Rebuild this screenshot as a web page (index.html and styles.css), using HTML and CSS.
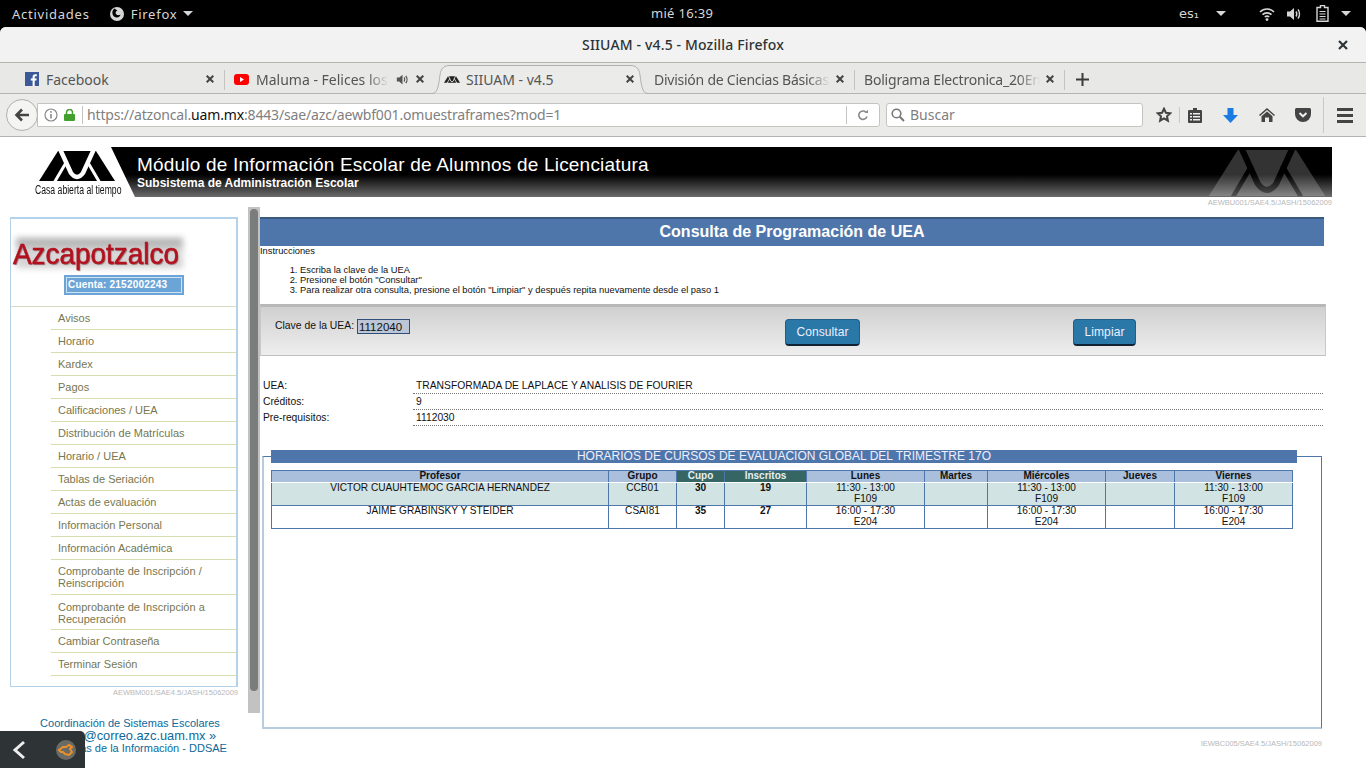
FILE: index.html
```html
<!DOCTYPE html>
<html lang="es">

<head>
    <meta charset="UTF-8">
    <title>SIIUAM - v4.5 - Mozilla Firefox</title>
    <link rel="stylesheet" href="styles.css">
</head>

<body>
    <div class="topbar">
        <div class="top-left">
            <span>Actividades</span>
            <span class="top-app">
                <svg width="16" height="16" viewBox="0 0 16 16"><circle cx="8" cy="8" r="7" fill="#d6d6d6"/><path d="M6 2.500 C3 3.500 2.500 8 5 10.500 C7.500 12.500 11 11.500 11.500 8.500 C10.500 9.500 8 9.500 7 8 C6 6.500 7 5 8.500 4.500 C7.500 4 6.500 3.500 6 2.500Z" fill="#000"/></svg>
                Firefox <i class="caret"></i>
            </span>
        </div>
        <div class="top-clock">mié 16:39</div>
        <div class="top-right">
            <span class="lang">es₁</span>
            <i class="caret lang-caret"></i>
            <svg class="wifi" width="16" height="16" viewBox="0 0 16 16" fill="none" stroke="#d6d6d6" stroke-width="1.600"><path d="M1 6 C5 2 11 2 15 6"/><path d="M3.500 8.600 C6 6.300 10 6.300 12.500 8.600"/><path d="M5.800 11 C7 10 9 10 10.200 11"/><circle cx="8" cy="13.600" r="1.400" fill="#d6d6d6" stroke="none"/></svg>
            <svg class="sound" width="16" height="16" viewBox="0 0 16 16" fill="none" stroke="#d6d6d6" stroke-width="1.400"><path d="M1 5.500h3l4-3.500v12l-4-3.500H1z" fill="#d6d6d6" stroke="none"/><path d="M10 5.500 C11 7 11 9 10 10.500"/><path d="M12 3.500 C14 6 14 10 12 12.500"/></svg>
            <svg class="battery" width="13" height="17" viewBox="0 0 13 17" fill="none" stroke="#d6d6d6" stroke-width="1.400"><path d="M4.500 .5h4v2h3.500v13.800H1V2.500h3.500z"/><path d="M3.500 6.500h6M3.500 9h6M3.500 11.500h6M3.500 14h6" stroke-width="1.200"/></svg>
            <i class="caret end-caret"></i>
        </div>
    </div>

    <div class="window">
        <div class="titlebar">
            <span class="title">SIIUAM - v4.5 - Mozilla Firefox</span>
            <svg class="win-close" width="10" height="10" viewBox="0 0 10 10" stroke="#2e3436" stroke-width="2.200"><path d="M1 1l8 8M9 1l-8 8"/></svg>
        </div>

        <div class="tabbar">
            <div class="tab tab-fb">
                <svg width="14" height="14" viewBox="0 0 14 14"><rect width="14" height="14" fill="#3b5998"/><path d="M9.700 14V8.600h1.700l.3-2.100h-2V5.200c0-.6.200-1 1-1h1.100V2.300c-.2 0-.8-.1-1.600-.1-1.600 0-2.600 1-2.600 2.700v1.600H5.800v2.100h1.800V14z" fill="#fff"/></svg>
                <span class="tab-label">Facebook</span>
                <svg class="tab-x" width="8" height="8" viewBox="0 0 8 8" stroke="#444" stroke-width="2"><path d="M.7.7l6.600 6.600M7.300.7L.7 7.300"/></svg>
            </div>
            <div class="tab tab-yt">
                <svg width="15" height="11" viewBox="0 0 15 11"><rect width="15" height="11" rx="3" fill="#f00"/><path d="M6 3l4 2.500L6 8z" fill="#fff"/></svg>
                <span class="tab-label">Maluma - Felices los</span>
                <svg class="tab-sound" width="13" height="13" viewBox="0 0 16 16" fill="none" stroke="#555" stroke-width="1.600"><path d="M1 5.500h3l4-3.500v12l-4-3.500H1z" fill="#555" stroke="none"/><path d="M10 5.500 C11 7 11 9 10 10.500"/><path d="M12 3.500 C14 6 14 10 12 12.500"/></svg>
                <svg class="tab-x" width="8" height="8" viewBox="0 0 8 8" stroke="#444" stroke-width="2"><path d="M.7.7l6.600 6.600M7.300.7L.7 7.300"/></svg>
            </div>
            <div class="tab tab-active">
                <svg class="tab-shape" width="216" height="31" viewBox="0 0 216 31"><path d="M0 30.500 C6 30.500 6.500 22 8 12 C9 5 12 2.500 18 2.500 H198 C204 2.500 207 5 208 12 C209.500 22 210 30.500 216 30.500" fill="#ebebe9" stroke="#b0b0ac"/></svg>
                <svg width="16" height="7" viewBox="0 0 76 30"><path d="M0 30L19 0h38l19 30z" fill="#222"/><path d="M21-2L32 22Q38 30 44 22L55-2M15 32L28 10M61 32L48 10" fill="none" stroke="#ebebe9" stroke-width="4"/></svg>
                <span class="tab-label">SIIUAM - v4.5</span>
                <svg class="tab-x" width="8" height="8" viewBox="0 0 8 8" stroke="#444" stroke-width="2"><path d="M.7.7l6.600 6.600M7.300.7L.7 7.300"/></svg>
            </div>
            <div class="tab tab-dcb">
                <span class="tab-label">División de Ciencias Básicas</span>
                <svg class="tab-x" width="8" height="8" viewBox="0 0 8 8" stroke="#444" stroke-width="2"><path d="M.7.7l6.600 6.600M7.300.7L.7 7.300"/></svg>
            </div>
            <div class="tab tab-bol">
                <span class="tab-label">Boligrama Electronica_20En</span>
                <svg class="tab-x" width="8" height="8" viewBox="0 0 8 8" stroke="#444" stroke-width="2"><path d="M.7.7l6.600 6.600M7.300.7L.7 7.300"/></svg>
            </div>
            <svg class="tab-new" width="13" height="13" viewBox="0 0 13 13" stroke="#3b3b3b" stroke-width="2"><path d="M6.500 0v13M0 6.500h13"/></svg>
        </div>

        <div class="navbar">
            <div class="back-btn">
                <svg width="16" height="14" viewBox="0 0 16 14" fill="none" stroke="#444" stroke-width="2.600"><path d="M15 7H3M8 1.500L2.500 7 8 12.500"/></svg>
            </div>
            <div class="urlbar">
                <svg class="url-info" width="14" height="14" viewBox="0 0 14 14" fill="none" stroke="#888" stroke-width="1.200"><circle cx="7" cy="7" r="6"/><path d="M7 6v4.500" stroke-width="1.600"/><circle cx="7" cy="3.900" r=".9" fill="#888" stroke="none"/></svg>
                <svg class="url-lock" width="11" height="12" viewBox="0 0 11 12"><rect y="5" width="11" height="7" rx="1" fill="#43a02f"/><path d="M2.500 5.500V3.500a3 3 0 0 1 6 0v2" fill="none" stroke="#43a02f" stroke-width="1.500"/></svg>
                <span class="url-text">https://atzoncal.<b>uam.mx</b>:8443/sae/azc/aewbf001.omuestraframes?mod=1</span>
                <span class="url-reload">
                    <svg width="12" height="12" viewBox="0 0 12 12" fill="none" stroke="#888" stroke-width="1.600"><path d="M10 7.500A4.200 4.200 0 1 1 8.800 3"/><path d="M7.500 4h3.500V.8" fill="#888" stroke="none"/></svg>
                </span>
            </div>
            <div class="searchbar">
                <svg width="14" height="14" viewBox="0 0 14 14" fill="none" stroke="#777" stroke-width="1.600"><circle cx="5.500" cy="5.500" r="4.300"/><path d="M8.800 8.800L13 13" stroke-width="2"/></svg>
                <span>Buscar</span>
            </div>
            <div class="tools">
                <svg class="t-star" width="16" height="16" viewBox="0 0 16 16" fill="none" stroke="#444" stroke-width="2"><path d="M8 1.800l1.900 4 4.300.5-3.200 3 .9 4.400L8 11.500l-3.900 2.200.9-4.400-3.200-3 4.300-.5z"/></svg>
                <i class="t-sep"></i>
                <svg class="t-list" width="14" height="15" viewBox="0 0 14 15"><path d="M5 0h4v2h4a1 1 0 0 1 1 1v11a1 1 0 0 1-1 1H1a1 1 0 0 1-1-1V3a1 1 0 0 1 1-1h4z" fill="#444"/><path d="M2 5h2v1.500H2zM5 5h7v1.500H5zM2 8h2v1.500H2zM5 8h7v1.500H5zM2 11h2v1.500H2zM5 11h7v1.500H5z" fill="#eee"/></svg>
                <svg class="t-down" width="15" height="15" viewBox="0 0 15 15"><path d="M4.500 0h6v7H15l-7.500 8L0 7h4.500z" fill="#1a7ce2"/></svg>
                <svg class="t-home" width="16" height="14" viewBox="0 0 16 14"><path d="M8 0l8 7-1 1-7-6-7 6-1-1z" fill="#444"/><path d="M8 3.500l5.500 4.700V14H10V9.500H6V14H2.500V8.200z" fill="#444"/></svg>
                <svg class="t-pocket" width="16" height="14" viewBox="0 0 16 14"><path d="M1.500 0h13A1.500 1.500 0 0 1 16 1.500V6a8 8 0 0 1-16 0V1.500A1.500 1.500 0 0 1 1.500 0z" fill="#444"/><path d="M4.500 5L8 8.300 11.500 5" fill="none" stroke="#eee" stroke-width="2"/></svg>
                <i class="t-sep t-sep-tall"></i>
                <span class="t-menu"><i></i><i></i><i></i></span>
            </div>
        </div>
    </div>

    <div class="page">
        <div class="banner-row">
            <div class="logo-box">
                <svg class="logo" width="76" height="30" viewBox="0 0 76 30">
                    <path d="M0 30L19 0h38l19 30z" fill="#000"/>
                    <path d="M21-2L32 22Q38 30 44 22L55-2" fill="none" stroke="#fff" stroke-width="4.500"/>
                    <path d="M15 32L28 10M61 32L48 10" fill="none" stroke="#fff" stroke-width="3"/>
                </svg>
                <span class="logo-text">Casa abierta al tiempo</span>
            </div>
            <div class="banner">
                <div class="banner-titles">
                    <h1>Módulo de Información Escolar de Alumnos de Licenciatura</h1>
                    <h2>Subsistema de Administración Escolar</h2>
                </div>
                <svg class="banner-mark" width="118" height="46" viewBox="0 0 76 30">
                    <path d="M0 30L19 0h38l19 30z" fill="#fff"/>
                    <path d="M21-2L32 22Q38 30 44 22L55-2" fill="none" stroke="#000" stroke-width="4"/>
                    <path d="M15 32L28 10M61 32L48 10" fill="none" stroke="#000" stroke-width="3"/>
                </svg>
            </div>
        </div>
        <div class="version banner-version">AEWBU001/SAE4.5/JASH/15062009</div>

        <div class="columns">
            <aside class="side">
                <div class="side-box">
                    <div class="campus"><span>Azcapotzalco</span></div>
                    <div class="account"><span>Cuenta: 2152002243</span></div>
                    <ul class="menu">
                        <li>Avisos</li>
                        <li>Horario</li>
                        <li>Kardex</li>
                        <li>Pagos</li>
                        <li>Calificaciones / UEA</li>
                        <li>Distribución de Matrículas</li>
                        <li>Horario / UEA</li>
                        <li>Tablas de Seriación</li>
                        <li>Actas de evaluación</li>
                        <li>Información Personal</li>
                        <li>Información Académica</li>
                        <li>Comprobante de Inscripción / Reinscripción</li>
                        <li class="menu-recup">Comprobante de Inscripción a Recuperación</li>
                        <li>Cambiar Contraseña</li>
                        <li>Terminar Sesión</li>
                    </ul>
                </div>
                <div class="version">AEWBM001/SAE4.5/JASH/15062009</div>
                <div class="side-foot">
                    <div>Coordinación de Sistemas Escolares</div>
                    <div class="foot-mail">cseazc@correo.azc.uam.mx »</div>
                    <div>Tecnologías de la Información - DDSAE</div>
                </div>
            </aside>

            <div class="scroll"><div class="scroll-thumb"></div></div>

            <main class="main">
                <div class="main-title">Consulta de Programación de UEA</div>
                <div class="instr-label">Instrucciones</div>
                <ol class="instr">
                    <li>Escriba la clave de la UEA</li>
                    <li>Presione el botón "Consultar"</li>
                    <li>Para realizar otra consulta, presione el botón "Limpiar" y después repita nuevamente desde el paso 1</li>
                </ol>

                <div class="form-band">
                    <label class="form-key">Clave de la UEA: <input class="form-input" value="1112040"></label>
                    <button class="btn btn-consult">Consultar</button>
                    <button class="btn btn-clear">Limpiar</button>
                </div>

                <dl class="info">
                    <dt>UEA:</dt><dd>TRANSFORMADA DE LAPLACE Y ANALISIS DE FOURIER</dd>
                    <dt>Créditos:</dt><dd>9</dd>
                    <dt>Pre-requisitos:</dt><dd>1112030</dd>
                </dl>

                <section class="sched">
                    <div class="sched-title">HORARIOS DE CURSOS DE EVALUACION GLOBAL DEL TRIMESTRE 17O</div>
                    <table class="grid">
                        <colgroup>
                            <col class="c-prof"><col class="c-grp"><col class="c-cup"><col class="c-ins"><col class="c-lun"><col class="c-mar"><col class="c-mie"><col class="c-jue"><col class="c-vie">
                        </colgroup>
                        <thead>
                            <tr>
                                <th>Profesor</th><th>Grupo</th><th class="th-dark">Cupo</th><th class="th-dark">Inscritos</th><th>Lunes</th><th>Martes</th><th>Miércoles</th><th>Jueves</th><th>Viernes</th>
                            </tr>
                        </thead>
                        <tbody>
                            <tr class="row-alt">
                                <td><div class="cell">VICTOR CUAUHTEMOC GARCIA HERNANDEZ</div></td><td><div class="cell">CCB01</div></td><td><div class="cell"><b>30</b></div></td><td><div class="cell"><b>19</b></div></td><td><div class="cell">11:30 - 13:00<br>F109</div></td><td></td><td><div class="cell">11:30 - 13:00<br>F109</div></td><td></td><td><div class="cell">11:30 - 13:00<br>F109</div></td>
                            </tr>
                            <tr>
                                <td><div class="cell">JAIME GRABINSKY Y STEIDER</div></td><td><div class="cell">CSAI81</div></td><td><div class="cell"><b>35</b></div></td><td><div class="cell"><b>27</b></div></td><td><div class="cell">16:00 - 17:30<br>E204</div></td><td></td><td><div class="cell">16:00 - 17:30<br>E204</div></td><td></td><td><div class="cell">16:00 - 17:30<br>E204</div></td>
                            </tr>
                        </tbody>
                    </table>
                </section>
                <div class="version main-version">IEWBC005/SAE4.5/JASH/15062009</div>
            </main>
        </div>
    </div>

    <!-- barra de captura encima de la pagina -->
    <div class="dock">
        <svg width="14" height="20" viewBox="0 0 14 20" fill="none" stroke="#eee" stroke-width="3"><path d="M12 2L3 10l9 8"/></svg>
        <span class="dock-icon">
            <svg width="20" height="20" viewBox="0 0 20 20"><circle cx="10" cy="10" r="10" fill="#6b6b66"/><path d="M3 10l4-3h3l3-2 3 2-2 2 2 3-3 3-4-1-2-2H5z" fill="none" stroke="#e8902a" stroke-width="2"/></svg>
        </span>
    </div>
</body>

</html>
```

FILE: styles.css
```css
* {
    margin: 0;
    padding: 0;
    box-sizing: border-box;
}

html,
body {
    height: 768px;
    overflow: hidden;
}

body {
    background: #000;
    font-family: "Liberation Sans", Arial, sans-serif;
    display: flex;
    flex-direction: column;
    position: relative;
}

/* gnome top bar */
.topbar {
    height: 27px;
    flex: none;
    background: #000;
    color: #d6d6d6;
    font-family: "Noto Sans", sans-serif;
    font-size: 13px;
    display: flex;
    align-items: center;
    justify-content: space-between;
    padding: 0 15px 0 12px;
    position: relative;
}

.top-left {
    display: flex;
    align-items: center;
    gap: 19px;
    letter-spacing: .75px;
}

.top-app {
    display: flex;
    align-items: center;
    gap: 6px;
}

.caret {
    display: inline-block;
    width: 0;
    height: 0;
    border-left: 5px solid transparent;
    border-right: 5px solid transparent;
    border-top: 5px solid #d6d6d6;
}

.top-clock {
    position: absolute;
    left: 651px;
    top: 4px;
    letter-spacing: .3px;
}

.top-right {
    display: flex;
    align-items: center;
}

.lang {
    font-family: "DejaVu Sans", sans-serif;
    font-size: 13px;
}

.lang-caret {
    margin-left: 17px;
}

.wifi {
    margin-left: 33px;
}

.sound {
    margin-left: 11px;
}

.battery {
    margin-left: 14px;
}

.end-caret {
    margin-left: 12px;
}

/* firefox chrome */
.window {
    flex: none;
    height: 110px;
    background: #e8e8e7;
    border-radius: 6px 6px 0 0;
    color: #3b3b3b;
    font-family: "Noto Sans", sans-serif;
}

.titlebar {
    height: 36px;
    background: #f2f2f2;
    border-radius: 6px 6px 0 0;
    border-bottom: 1px solid #b4b4b0;
    display: flex;
    align-items: center;
    justify-content: center;
    position: relative;
}

.title {
    font-size: 14px;
    font-weight: 500;
    letter-spacing: .15px;
    color: #2e3436;
}

.win-close {
    position: absolute;
    right: 18px;
    top: 13px;
}

.tabbar {
    height: 31px;
    background: #e8e8e7;
    border-bottom: 1px solid #b4b4b0;
    display: flex;
    align-items: center;
    font-size: 14px;
    position: relative;
}

.tab {
    height: 30px;
    padding-top: 2px;
    display: flex;
    align-items: center;
    position: relative;
    white-space: nowrap;
    color: #555;
}

.tab-label {
    overflow: hidden;
    flex: 1;
    -webkit-mask-image: linear-gradient(to left, transparent, #000 22px);
    mask-image: linear-gradient(to left, transparent, #000 22px);
}

.tab-x {
    flex: none;
}

/* separador corto entre pestanas */
.tab-fb::after,
.tab-dcb::after,
.tab-bol::after {
    content: "";
    position: absolute;
    right: 0;
    top: 7px;
    width: 1px;
    height: 20px;
    background: #c4c4c0;
}

.tab-fb {
    width: 225px;
    padding-left: 25px;
    padding-right: 11px;
    gap: 7px;
}

.tab-fb .tab-label,
.tab-active .tab-label {
    -webkit-mask-image: none;
    mask-image: none;
}

.tab-yt {
    width: 207px;
    padding-left: 9px;
    padding-right: 8px;
    gap: 7px;
}

.tab-sound {
    flex: none;
}

.tab-active {
    width: 216px;
    padding-left: 12px;
    padding-right: 14px;
    gap: 6px;
    isolation: isolate;
}

.tab-shape {
    position: absolute;
    left: 0;
    top: 0;
    z-index: -1;
}

.tab-dcb {
    width: 207px;
    padding-left: 6px;
    padding-right: 11px;
    gap: 6px;
    letter-spacing: -.25px;
}

.tab-bol {
    width: 210px;
    padding-left: 9px;
    padding-right: 11px;
    gap: 6px;
    letter-spacing: -.2px;
}

.tab-new {
    margin-left: 11px;
    margin-top: 2px;
}

.navbar {
    height: 43px;
    background: #ebebe9;
    border-bottom: 1px solid #b4b4b0;
    display: flex;
    align-items: center;
    padding: 0 6px;
    position: relative;
}

.back-btn {
    width: 32px;
    height: 32px;
    border-radius: 50%;
    background: #f4f4f3;
    border: 1px solid #b0b0ac;
    display: flex;
    align-items: center;
    justify-content: center;
    flex: none;
    margin-top: -1px;
    z-index: 1;
}

.urlbar {
    width: 843px;
    height: 24px;
    margin-left: -1px;
    background: #fff;
    border: 1px solid #c4c4c0;
    border-radius: 0 3px 3px 0;
    display: flex;
    align-items: center;
    font-size: 14px;
    color: #808080;
    padding-left: 6px;
    margin-top: -1px;
}

.url-lock {
    margin-left: 6px;
    flex: none;
}

.url-text {
    flex: 1;
    border-left: 1px solid #c4c4c0;
    margin-left: 7px;
    padding-left: 4px;
    height: 18px;
    line-height: 18px;
    white-space: nowrap;
    letter-spacing: -.16px;
}

.url-text b {
    font-weight: 400;
    color: #111;
}

.url-reload {
    width: 33px;
    height: 18px;
    border-left: 1px solid #c4c4c0;
    display: flex;
    align-items: center;
    justify-content: center;
}

.searchbar {
    width: 257px;
    height: 24px;
    margin-left: 6px;
    margin-top: -1px;
    background: #fff;
    border: 1px solid #c4c4c0;
    border-radius: 3px;
    display: flex;
    align-items: center;
    gap: 5px;
    padding-left: 4px;
    font-size: 14px;
    color: #808080;
}

.tools {
    display: flex;
    align-items: center;
    margin-left: 13px;
    height: 42px;
}

.t-sep {
    width: 1px;
    height: 16px;
    background: #c8c8c4;
    margin: 0 8px 0 7px;
}

.t-down {
    margin-left: 21px;
}

.t-home {
    margin-left: 21px;
}

.t-pocket {
    margin-left: 20px;
}

.t-sep-tall {
    height: 36px;
    margin: 0 13px 0 12px;
}

.t-menu {
    display: flex;
    flex-direction: column;
    gap: 3px;
}

.t-menu i {
    display: block;
    width: 16px;
    height: 3px;
    background: #444;
}

/* pagina */
.page {
    flex: 1;
    background: #fff;
    padding: 10px 34px 0 10px;
    overflow: hidden;
}

.banner-row {
    display: flex;
    height: 50px;
    margin-left: 25px;
}

.logo-box {
    width: 76px;
    flex: none;
    padding: 4px 0 0 4px;
}

.logo {
    display: block;
}

.logo-text {
    display: block;
    font-size: 12px;
    color: #111;
    white-space: nowrap;
    transform: scaleX(.72);
    transform-origin: left;
    margin-top: 3px;
    margin-left: -4px;
    line-height: 12px;
}

.banner {
    flex: 1;
    height: 50px;
    background: linear-gradient(to bottom, #000 0, #000 55%, #6c6c6c 100%);
    clip-path: polygon(0 0, 100% 0, 100% 100%, 24px 100%);
    display: flex;
    justify-content: space-between;
    padding-left: 26px;
    color: #fff;
}

.banner-titles h1 {
    font-size: 19px;
    font-weight: 400;
    line-height: 22px;
    margin-top: 7px;
    letter-spacing: .2px;
}

.banner-titles h2 {
    font-size: 12px;
    font-weight: 700;
    line-height: 14px;
}

.banner-mark {
    opacity: .2;
    margin-top: 3px;
    margin-right: 6px;
}

.version {
    font-size: 7.5px;
    color: #b8b8b8;
    text-align: right;
    line-height: 9px;
}

.banner-version {
    margin-top: 1px;
}

.columns {
    display: flex;
    align-items: flex-start;
}

.side {
    width: 228px;
    flex: none;
    margin-top: 10px;
}

.side-box {
    height: 470px;
    border: 2px solid #b4d2ea;
    border-left-width: 1px;
    border-bottom-width: 1px;
    padding-top: 16px;
}

.campus {
    height: 36px;
    margin-left: 2px;
    width: 173px;
    position: relative;
}

.campus::before {
    content: "";
    position: absolute;
    inset: 3px;
    background: linear-gradient(to bottom, #a4a4a4, #dcdcdc 50%, #cfcfcf);
    filter: blur(3px);
}

.campus span {
    display: block;
    position: relative;
    font-size: 30px;
    font-weight: 400;
    color: #b2121f;
    -webkit-text-stroke: .6px #b2121f;
    line-height: 38px;
    white-space: nowrap;
    transform: scaleX(.93);
    transform-origin: left;
    text-shadow: 1px 1px 1px #9a7a7c;
}

.account {
    margin: 4px 0 0 53px;
    width: 120px;
    height: 20px;
    background: #6ba5d8;
    border: 1px solid #6ba5d8;
    padding: 1px;
}

.account span {
    display: block;
    height: 16px;
    border: 1px solid #cfe2f2;
    color: #fff;
    font-size: 10px;
    font-weight: 700;
    letter-spacing: .2px;
    line-height: 14px;
    padding-left: 1px;
    white-space: nowrap;
}

.menu {
    list-style: none;
    margin-top: 11px;
    border-top: 1px solid #d8dcc0;
}

.menu li {
    margin-left: 40px;
    padding: 5px 0 5px 7px;
    font-size: 11px;
    line-height: 12px;
    color: #77774f;
    border-bottom: 1px solid #d8dcb0;
}

.menu .menu-recup {
    padding: 6px 0 4px 7px;
}

.side > .version {
    margin-top: 1px;
}

.side-foot {
    margin-top: 20px;
    padding-left: 12px;
    font-size: 11px;
    line-height: 12px;
    color: #0b6a9c;
    white-space: nowrap;
    text-align: center;
}

.foot-mail {
    font-size: 12.8px;
    line-height: 13px;
}

.scroll {
    width: 12px;
    height: 506px;
    flex: none;
    background: #c2c2c2;
    margin-left: 10px;
    padding: 2px 2px 0;
}

.scroll-thumb {
    width: 8px;
    height: 482px;
    background: #7a7d7c;
    border-radius: 4px;
}

.main {
    width: 1064px;
    flex: none;
    margin-top: 10px;
}

.main-title {
    height: 29px;
    background: #4f76aa;
    border-top: 2px solid #3a5a80;
    color: #fff;
    font-size: 16px;
    font-weight: 700;
    text-align: center;
    line-height: 26px;
}

.instr-label {
    font-size: 9.33px;
    line-height: 11px;
    color: #111;
}

.instr {
    font-size: 9.33px;
    line-height: 10px;
    color: #111;
    margin-top: 8px;
    padding-left: 40px;
    height: 39px;
}

.form-band {
    width: 1066px;
    height: 52px;
    border-top: 3px solid #b8b8b8;
    border-left: 1px solid #c8c8c8;
    border-right: 1px solid #c8c8c8;
    border-bottom: 1px solid #c0c0c0;
    background: linear-gradient(to bottom, #d0d0d0, #eeeeee);
    display: flex;
    align-items: flex-start;
}

.form-key {
    font-size: 10.4px;
    color: #111;
    margin: 12px 0 0 14px;
    white-space: nowrap;
}

.form-input {
    width: 53px;
    height: 15px;
    background: #bcc6d6;
    border: 1px solid #2f4f78;
    font-family: "Liberation Sans", sans-serif;
    font-size: 11.5px;
    padding: 0 0 0 1px;
    vertical-align: middle;
    color: #111;
}

.btn {
    height: 27px;
    background: #2a78a8;
    color: #eef;
    border: 1px solid #1f5f88;
    border-bottom: 2px solid #123;
    border-radius: 4px;
    font-family: "Liberation Sans", sans-serif;
    font-size: 12px;
    letter-spacing: .1px;
    margin-top: 12px;
    padding: 0;
}

.btn-consult {
    width: 75px;
    margin-left: 375px;
}

.btn-clear {
    width: 63px;
    margin-left: 213px;
}

.info {
    margin-top: 22px;
    display: grid;
    grid-template-columns: 153px 1fr;
    font-size: 10.3px;
    line-height: 12px;
    color: #111;
    padding-left: 3px;
}

.info dt {
    height: 16px;
    padding-top: 2px;
}

.info dd {
    height: 16px;
    padding-top: 2px;
    border-bottom: 1px dotted #777;
    margin-left: -3px;
    padding-left: 3px;
    margin-right: 1px;
}

.sched {
    margin-top: 24px;
    height: 279px;
    width: 1060px;
    margin-left: 2px;
    position: relative;
}

/* marco del horario, empieza debajo del titulo */
.sched::before {
    content: "";
    position: absolute;
    inset: 6px 0 0 0;
    border: 2px solid #b8cce0;
    border-top: 1px solid #4f76aa;
    border-right: 1px solid #4f76aa;
}

.sched-title {
    height: 13px;
    margin-left: 9px;
    width: 1026px;
    background: #4f76aa;
    color: #eef;
    font-size: 12px;
    line-height: 13px;
    text-align: center;
    position: relative;
}

.grid {
    margin: 7px 0 0 9px;
    width: 1021px;
    border-collapse: collapse;
    table-layout: fixed;
    font-size: 10.1px;
    line-height: 11px;
    color: #111;
    text-align: center;
}

.c-prof { width: 337px; }
.c-grp { width: 68px; }
.c-cup { width: 48px; }
.c-ins { width: 82px; }
.c-lun { width: 118px; }
.c-mar { width: 63px; }
.c-mie { width: 118px; }
.c-jue { width: 69px; }
.c-vie { width: 118px; }

.grid th,
.grid td {
    border: 1px solid #4f76aa;
    padding: 0;
    vertical-align: top;
}

.grid th {
    height: 12px;
    background: #a9bfdc;
    border-bottom-color: #fff;
    font-size: 10px;
    font-weight: 700;
    line-height: 9px;
}

.grid th.th-dark {
    background: #356664;
    color: #e8f0f0;
}

.grid td {
    height: 23px;
}

.cell {
    margin-top: -1px;
}

.row-alt td {
    background: #d1e3e2;
}

.main-version {
    margin: 10px 2px 0 0;
}

/* dock */
.dock {
    position: absolute;
    left: 0;
    bottom: 0;
    width: 85px;
    height: 37px;
    background: #2e3436;
    border-radius: 0 5px 0 0;
    display: flex;
    align-items: center;
    padding-left: 12px;
    gap: 30px;
}

.dock-icon {
    display: flex;
}
```
